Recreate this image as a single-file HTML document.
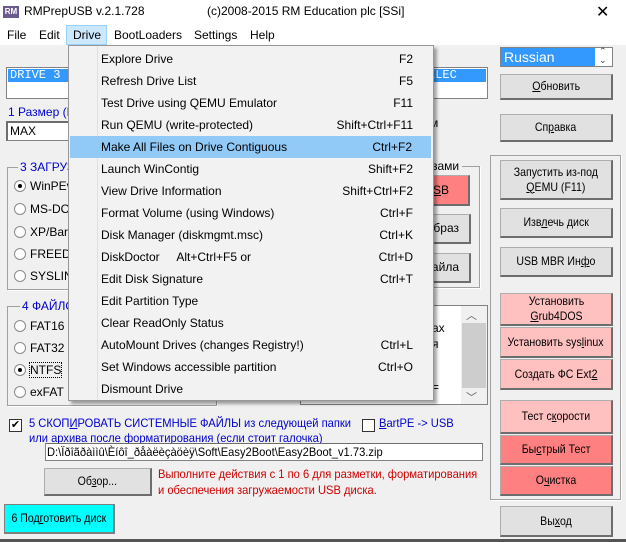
<!DOCTYPE html>
<html><head><meta charset="utf-8"><style>
*{margin:0;padding:0;box-sizing:border-box}
body{width:626px;height:542px;background:#f0f0f0;font-family:"Liberation Sans","DejaVu Sans",sans-serif;font-size:12px;color:#000;position:relative;overflow:hidden}
.a{position:absolute;white-space:nowrap}
.btn{position:absolute;background:#e1e1e1;border:1px solid #adadad;border-right:2px solid #6d6d6d;border-bottom:2px solid #6d6d6d;display:flex;align-items:center;justify-content:center;text-align:center;font-size:12px;line-height:15px;white-space:nowrap}
.btn>span{display:inline-block;transform:scaleX(.88)}
.pk{background:#ffc0c0}.rd{background:#ff8080}
.grp{position:absolute;border:1px solid #a0a0a0;box-shadow:1px 1px 0 #fff}
.blue{color:#0000cc}
.rad{position:absolute;width:12px;height:12px;border-radius:50%;border:1px solid #8a8a8a;background:#fff}
.rad.on::after{content:"";position:absolute;left:3px;top:3px;width:4px;height:4px;border-radius:50%;background:#000}
.menu{position:absolute;left:68px;top:45px;width:366px;height:356px;background:#f2f2f2;border:1px solid #979797;box-shadow:3px 3px 3px rgba(0,0,0,.35)}
.mi{position:absolute;left:0;width:364px;height:22px;font-size:12px;line-height:22px}
.mi span{position:absolute;left:32px}
.mi b{position:absolute;right:20px;font-weight:normal}
.u{text-decoration:underline}
.sx{transform-origin:left center;transform:scaleX(.93)}
</style></head><body>
<div class="a" style="left:0;top:0;width:626px;height:24px;background:#fff"></div>
<div class="a" style="left:3px;top:6px;width:16px;height:12px;background:#6b5a8e;color:#fff;font-size:8px;line-height:12px;text-align:center;font-weight:bold">RM</div>
<div class="a" style="left:24px;top:4px;font-size:12px">RMPrepUSB v.2.1.728</div>
<div class="a" style="left:207px;top:4px;font-size:12px">(c)2008-2015 RM Education plc [SSi]</div>
<div class="a" style="left:596px;top:2px;font-size:16px">✕</div>
<div class="a" style="left:0;top:24px;width:626px;height:21px;background:#fff"></div>
<div class="a" style="left:66px;top:25px;width:41px;height:20px;background:#cce8ff;border:1px solid #99d1ff"></div>
<div class="a" style="left:7px;top:28px">File</div>
<div class="a" style="left:39px;top:28px">Edit</div>
<div class="a" style="left:73px;top:28px">Drive</div>
<div class="a" style="left:114px;top:28px">BootLoaders</div>
<div class="a" style="left:194px;top:28px">Settings</div>
<div class="a" style="left:250px;top:28px">Help</div>

<div class="a" style="left:6px;top:67px;width:482px;height:32px;background:#fff;border:1px solid #828282"></div>
<div class="a" style="left:8px;top:69px;width:478px;height:13px;background:#3399ff;color:#fff;font-family:'Liberation Mono',monospace;font-size:12px;line-height:13px;padding-left:2px">DRIVE 3<span style="position:absolute;left:420px">ELEC</span></div>
<div class="a blue" style="left:8px;top:105px">1 Размер (МБ)</div>
<div class="a" style="left:6px;top:121px;width:100px;height:20px;background:#fff;border:1px solid #828282;border-top:2px solid #6d6d6d;border-left:2px solid #6d6d6d;padding-left:2px;line-height:16px">MAX</div>
<div class="a" style="left:430px;top:116px">м</div>

<div class="grp" style="left:7px;top:167px;width:120px;height:123px"></div>
<div class="a blue" style="left:18px;top:160px;background:#f0f0f0;padding:0 2px">3 ЗАГРУЗКА</div>
<div class="rad on" style="left:14px;top:180px"></div><div class="a" style="left:30px;top:179px">WinPEv2</div>
<div class="rad" style="left:14px;top:203px"></div><div class="a" style="left:30px;top:202px">MS-DOS</div>
<div class="rad" style="left:14px;top:226px"></div><div class="a" style="left:30px;top:225px">XP/Bart</div>
<div class="rad" style="left:14px;top:248px"></div><div class="a" style="left:30px;top:247px">FREEDOS</div>
<div class="rad" style="left:14px;top:270px"></div><div class="a" style="left:30px;top:269px">SYSLINUX</div>
<div class="grp" style="left:380px;top:166px;width:100px;height:122px"></div>
<div class="a" style="left:432px;top:159px;background:#f0f0f0;padding-right:3px">зами</div>
<div class="btn rd" style="left:400px;top:175px;width:70px;height:31px;justify-content:flex-end;padding-right:19px">U<span style="transform:none" class="u">S</span>B</div>
<div class="btn" style="left:400px;top:214px;width:71px;height:30px;justify-content:flex-end;padding-right:10px">браз</div>
<div class="btn" style="left:400px;top:253px;width:71px;height:30px;justify-content:flex-end;padding-right:10px">файла</div>

<div class="grp" style="left:7px;top:306px;width:210px;height:100px"></div>
<div class="a blue" style="left:20px;top:299px;background:#f0f0f0;padding:0 2px">4 ФАЙЛОВАЯ</div>
<div class="rad" style="left:14px;top:320px"></div><div class="a" style="left:30px;top:319px">FAT16</div>
<div class="rad" style="left:14px;top:342px"></div><div class="a" style="left:30px;top:341px">FAT32</div>
<div class="rad on" style="left:14px;top:364px"></div><div class="a" style="left:30px;top:363px;outline:1px dotted #000">NTFS</div>
<div class="rad" style="left:14px;top:386px"></div><div class="a" style="left:30px;top:385px">exFAT</div>
<div class="a" style="left:300px;top:305px;width:188px;height:100px;background:#fff;border:1px solid #828282"></div>
<div class="a" style="left:432px;top:321px">ах</div>
<div class="a" style="left:432px;top:337px">я</div>
<div class="a" style="left:432px;top:380px">=</div>
<div class="a" style="left:461px;top:306px;width:26px;height:98px;background:#f0f0f0"></div>
<div class="a" style="left:462px;top:323px;width:24px;height:65px;background:#cdcdcd"></div>
<div class="a" style="left:466px;top:307px;color:#606060;font-size:11px">︿</div>
<div class="a" style="left:466px;top:389px;color:#606060;font-size:11px">﹀</div>

<div class="a" style="left:500px;top:47px;width:113px;height:20px;border:1px solid #828282;background:#fff"></div>
<div class="a" style="left:501px;top:48px;width:94px;height:18px;background:#3399ff;color:#fff;font-size:14px;line-height:18px;padding-left:3px">Russian</div>
<div class="a" style="left:599px;top:47px;font-size:9px;line-height:9px;color:#444">⌃<br>⌄</div>
<div class="btn" style="left:500px;top:74px;width:113px;height:26px"><span><span class="u">О</span>бновить</span></div>
<div class="btn" style="left:500px;top:114px;width:113px;height:28px"><span>Сп<span class="u">р</span>авка</span></div>
<div class="grp" style="left:490px;top:155px;width:131px;height:345px"></div>
<div class="btn" style="left:500px;top:160px;width:113px;height:40px"><span>Запустить из-под<br><span class="u">Q</span>EMU (F11)</span></div>
<div class="btn" style="left:500px;top:208px;width:113px;height:30px"><span>Изв<span class="u">л</span>ечь диск</span></div>
<div class="btn" style="left:500px;top:247px;width:113px;height:30px"><span>USB MBR Ин<span class="u">ф</span>о</span></div>
<div class="btn pk" style="left:500px;top:293px;width:113px;height:33px"><span>Установить<br><span class="u">G</span>rub4DOS</span></div>
<div class="btn pk" style="left:500px;top:327px;width:113px;height:31px"><span>Установить sys<span class="u">l</span>inux</span></div>
<div class="btn pk" style="left:500px;top:359px;width:113px;height:31px"><span>Создать ФС Ext<span class="u">2</span></span></div>
<div class="btn pk" style="left:500px;top:400px;width:113px;height:34px"><span>Тест с<span class="u">к</span>орости</span></div>
<div class="btn rd" style="left:500px;top:435px;width:113px;height:30px"><span>Бы<span class="u">с</span>трый Тест</span></div>
<div class="btn rd" style="left:500px;top:466px;width:113px;height:30px"><span>О<span class="u">ч</span>истка</span></div>
<div class="btn" style="left:500px;top:506px;width:113px;height:31px"><span>Вы<span class="u">х</span>од</span></div>

<div class="a" style="left:9px;top:419px;width:13px;height:13px;border:1px solid #333;background:#fff;font-size:11px;line-height:11px;text-align:center">✔</div>
<div class="a blue sx" style="left:29px;top:416px">5 СКОП<span class="u">И</span>РОВАТЬ СИСТЕМНЫЕ ФАЙЛЫ из следующей папки</div>
<div class="a blue sx" style="left:29px;top:431px">или архива после форматирования (если стоит галочка)</div>
<div class="a" style="left:362px;top:419px;width:13px;height:13px;border:1px solid #333;background:#fff"></div>
<div class="a blue sx" style="left:379px;top:416px"><span class="u">B</span>artPE -&gt; USB</div>
<div class="a" style="left:45px;top:443px;width:438px;height:18px;background:#fff;border:1px solid #828282;border-top:1px solid #6d6d6d"></div>
<div class="a sx" style="left:47px;top:445px">D:\Ïðîãðàììû\Èíôî_ðåàëèçàöèÿ\Soft\Easy2Boot\Easy2Boot_v1.73.zip</div>
<div class="btn" style="left:44px;top:468px;width:108px;height:28px"><span>Об<span class="u">з</span>ор...</span></div>
<div class="a sx" style="left:158px;top:467px;color:#cc0000">Выполните действия с 1 по 6 для разметки, форматирования</div>
<div class="a sx" style="left:158px;top:483px;color:#cc0000">и обеспечения загружаемости USB диска.</div>
<div class="btn" style="left:4px;top:504px;width:111px;height:30px;background:#00ffff;border-color:#7f7f7f"><span>6 Под<span class="u">г</span>отовить диск</span></div>
<div class="a" style="left:0;top:539px;width:626px;height:3px;background:#555"></div>

<div class="menu">
<div class="a" style="left:28px;top:0;width:1px;height:354px;background:#e0e0e0"></div>
<div class="mi" style="top:2px"><span>Explore Drive</span><b>F2</b></div>
<div class="mi" style="top:24px"><span>Refresh Drive List</span><b>F5</b></div>
<div class="mi" style="top:46px"><span>Test Drive using QEMU Emulator</span><b>F11</b></div>
<div class="mi" style="top:68px"><span>Run QEMU (write-protected)</span><b>Shift+Ctrl+F11</b></div>
<div class="mi" style="top:90px;left:1px;width:361px;background:#91c9f7"><span style="left:31px">Make All Files on Drive Contiguous</span><b style="right:19px">Ctrl+F2</b></div>
<div class="mi" style="top:112px"><span>Launch WinContig</span><b>Shift+F2</b></div>
<div class="mi" style="top:134px"><span>View Drive Information</span><b>Shift+Ctrl+F2</b></div>
<div class="mi" style="top:156px"><span>Format Volume (using Windows)</span><b>Ctrl+F</b></div>
<div class="mi" style="top:178px"><span>Disk Manager (diskmgmt.msc)</span><b>Ctrl+K</b></div>
<div class="mi" style="top:200px"><span>DiskDoctor&nbsp;&nbsp;&nbsp;&nbsp;&nbsp;Alt+Ctrl+F5 or</span><b>Ctrl+D</b></div>
<div class="mi" style="top:222px"><span>Edit Disk Signature</span><b>Ctrl+T</b></div>
<div class="mi" style="top:244px"><span>Edit Partition Type</span></div>
<div class="mi" style="top:266px"><span>Clear ReadOnly Status</span></div>
<div class="mi" style="top:288px"><span>AutoMount Drives (changes Registry!)</span><b>Ctrl+L</b></div>
<div class="mi" style="top:310px"><span>Set Windows accessible partition</span><b>Ctrl+O</b></div>
<div class="mi" style="top:332px"><span>Dismount Drive</span></div>
</div>
</body></html>
